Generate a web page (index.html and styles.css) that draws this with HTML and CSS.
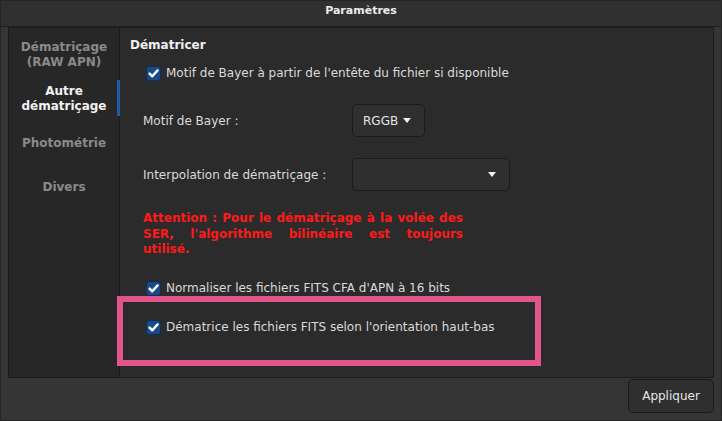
FILE: index.html
```html
<!DOCTYPE html>
<html lang="fr">
<head>
<meta charset="utf-8">
<title>Paramètres</title>
<link rel="stylesheet" href="styles.css">
</head>
<body>
<div class="window">
  <header class="titlebar">Paramètres</header>
  <div class="frame">
    <nav class="sidebar">
      <div class="nav-item">Dématriçage<br>(RAW APN)</div>
      <div class="nav-item active">Autre<br>dématriçage</div>
      <div class="nav-item">Photométrie</div>
      <div class="nav-item">Divers</div>
    </nav>
    <main class="content">
      <h2 class="section-title">Dématricer</h2>
      <label class="check-row row-first">
        <span class="checkbox"><svg viewBox="0 0 15 15" width="15" height="15"><path d="M3.6 7.6 L6.3 10.3 L11.6 4.4" fill="none" stroke="#fff" stroke-width="2.4" stroke-linecap="round" stroke-linejoin="round"/></svg></span>
        <span>Motif de Bayer à partir de l'entête du fichier si disponible</span>
      </label>
      <div class="field-row row-combo1">
        <span class="field-label">Motif de Bayer :</span>
        <button class="combo combo-small"><span>RGGB</span><span class="arrow"></span></button>
      </div>
      <div class="field-row row-combo2">
        <span class="field-label">Interpolation de dématriçage :</span>
        <button class="combo combo-wide"><span></span><span class="arrow"></span></button>
      </div>
      <p class="warning">Attention : Pour le dématriçage à la volée des SER, l'algorithme bilinéaire est toujours utilisé.</p>
      <label class="check-row row-check2">
        <span class="checkbox"><svg viewBox="0 0 15 15" width="15" height="15"><path d="M3.6 7.6 L6.3 10.3 L11.6 4.4" fill="none" stroke="#fff" stroke-width="2.4" stroke-linecap="round" stroke-linejoin="round"/></svg></span>
        <span>Normaliser les fichiers FITS CFA d'APN à 16 bits</span>
      </label>
      <label class="check-row row-check3">
        <span class="checkbox"><svg viewBox="0 0 15 15" width="15" height="15"><path d="M3.6 7.6 L6.3 10.3 L11.6 4.4" fill="none" stroke="#fff" stroke-width="2.4" stroke-linecap="round" stroke-linejoin="round"/></svg></span>
        <span>Dématrice les fichiers FITS selon l'orientation haut-bas</span>
      </label>
      <div class="highlight"></div>
    </main>
  </div>
  <footer class="footer">
    <button class="btn">Appliquer</button>
  </footer>
</div>
</body>
</html>
```

FILE: styles.css
```css
* { box-sizing: border-box; }

html, body {
  margin: 0;
  padding: 0;
  width: 722px;
  height: 421px;
  overflow: hidden;
  background: #353535;
  font-family: "DejaVu Sans", sans-serif;
  font-size: 12px;
  color: #dadada;
}

.window {
  width: 722px;
  height: 421px;
  display: flex;
  flex-direction: column;
  background: #353535;
  border: 1px solid #252525;
}

.titlebar {
  height: 26px;
  flex: none;
  background: #303030;
  border-bottom: 1px solid #1f1f1f;
  text-align: center;
  font-weight: bold;
  font-size: 11px;
  line-height: 13px;
  padding-top: 3px;
  color: #ececec;
}

.frame {
  flex: none;
  height: 351px;
  margin: 0 7px;
  border: 1px solid #1c1c1c;
  display: flex;
  background: #2b2b2b;
}

.sidebar {
  width: 111px;
  flex: none;
  background: #272727;
  border-right: 1px solid #1c1c1c;
  padding-top: 5px;
}

.nav-item {
  position: relative;
  height: 44px;
  display: flex;
  align-items: center;
  justify-content: center;
  text-align: center;
  font-weight: bold;
  line-height: 15px;
  color: #8a8a8a;
}

.nav-item.active {
  color: #f2f2f2;
}

.nav-item.active::after {
  content: "";
  position: absolute;
  right: -1px;
  top: 3px;
  bottom: 5px;
  width: 3px;
  background: #1f5ba3;
}

.content {
  position: relative;
  flex: 1;
  padding: 10px 0 0 10px;
  display: flex;
  flex-direction: column;
  align-items: flex-start;
}

.section-title {
  margin: 0;
  font-size: 12px;
  font-weight: bold;
  line-height: 15px;
  color: #f0f0f0;
}

.check-row {
  display: flex;
  align-items: center;
  gap: 5px;
  height: 20px;
  margin-left: 16px;
  line-height: 15px;
}

.row-first { margin-top: 10px; }
.row-check2 { margin-top: 21px; }
.row-check3 { margin-top: 19px; }

.checkbox {
  width: 15px;
  height: 15px;
  flex: none;
  border-radius: 3px;
  background: #174a86;
  border: 1px solid #0e2e55;
  display: flex;
  align-items: center;
  justify-content: center;
}

.checkbox svg {
  display: block;
  margin: -1px;
}

.field-row {
  display: flex;
  align-items: center;
  margin-left: 13px;
}

.row-combo1 { margin-top: 21px; }
.row-combo2 { margin-top: 21px; }

.field-label {
  width: 209px;
  flex: none;
}

.combo {
  height: 33px;
  display: flex;
  align-items: center;
  justify-content: space-between;
  background: #2f2f2f;
  border: 1px solid #1b1b1b;
  border-radius: 5px;
  color: #e6e6e6;
  font-family: "DejaVu Sans", sans-serif;
  font-size: 12px;
  padding: 0 13px 0 10px;
}

.combo-small { width: 73px; }
.combo-wide { width: 158px; }

.arrow {
  width: 0;
  height: 0;
  border-left: 4.5px solid transparent;
  border-right: 4.5px solid transparent;
  border-top: 5px solid #f0f0f0;
}

.warning {
  margin: 20px 0 0 13px;
  width: 320px;
  color: #ff1a1a;
  font-weight: bold;
  line-height: 15.5px;
  text-align: justify;
}

.highlight {
  position: absolute;
  left: -3px;
  top: 268px;
  width: 424px;
  height: 70px;
  border: 6px solid #e1558b;
  pointer-events: none;
}

.footer {
  flex: 1;
  display: flex;
  justify-content: flex-end;
  align-items: flex-start;
  padding: 1px 7px 0 0;
}

.btn {
  width: 86px;
  height: 34px;
  background: #2f2f2f;
  border: 1px solid #1b1b1b;
  border-radius: 5px;
  color: #e6e6e6;
  font-family: "DejaVu Sans", sans-serif;
  font-size: 12px;
}
```
